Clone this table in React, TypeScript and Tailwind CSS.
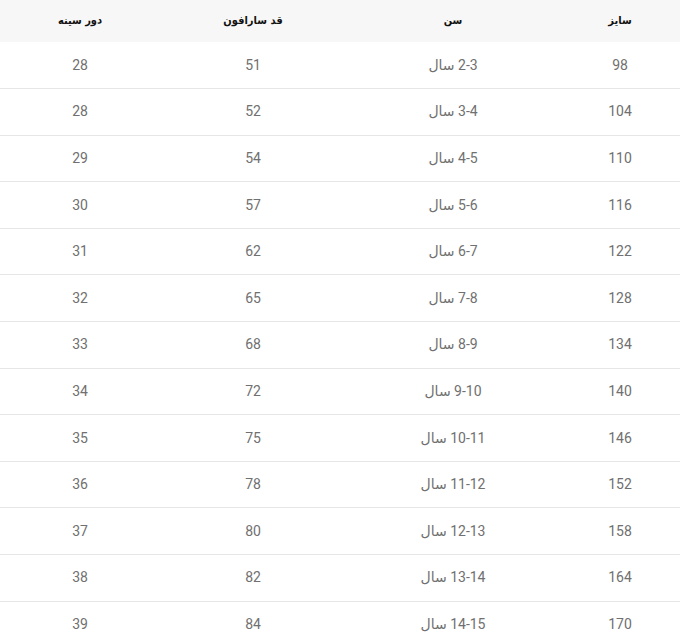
const rows: [string, string, string, string][] = [
  ["98", "2-3 سال", "51", "28"],
  ["104", "3-4 سال", "52", "28"],
  ["110", "4-5 سال", "54", "29"],
  ["116", "5-6 سال", "57", "30"],
  ["122", "6-7 سال", "62", "31"],
  ["128", "7-8 سال", "65", "32"],
  ["134", "8-9 سال", "68", "33"],
  ["140", "9-10 سال", "72", "34"],
  ["146", "10-11 سال", "75", "35"],
  ["152", "11-12 سال", "78", "36"],
  ["158", "12-13 سال", "80", "37"],
  ["164", "13-14 سال", "82", "38"],
  ["170", "14-15 سال", "84", "39"],
];

export default function App() {
  return (
    <div dir="rtl" className="w-[680px] bg-white font-['Roboto','DejaVu_Sans',sans-serif]">
      <table className="w-full border-collapse table-fixed">
        <colgroup>
          <col className="w-[120px]" />
          <col className="w-[214px]" />
          <col className="w-[186px]" />
          <col className="w-[160px]" />
        </colgroup>
        <thead>
          <tr className="bg-[#f7f7f7] h-[42px]">
            {["سایز", "سن", "قد سارافون", "دور سینه"].map((h) => (
              <th key={h} className="text-center text-[11px] font-bold text-[#111] font-['DejaVu_Sans_Condensed','DejaVu_Sans',sans-serif]">
                {h}
              </th>
            ))}
          </tr>
        </thead>
        <tbody>
          {rows.map((r) => (
            <tr key={r[0]} className="h-[46.6px] border-b border-[#e6e6e6] last:border-b-0">
              {r.map((c, i) => (
                <td key={i} className="text-center text-[14px] text-[#707070]">
                  {c}
                </td>
              ))}
            </tr>
          ))}
        </tbody>
      </table>
    </div>
  );
}
